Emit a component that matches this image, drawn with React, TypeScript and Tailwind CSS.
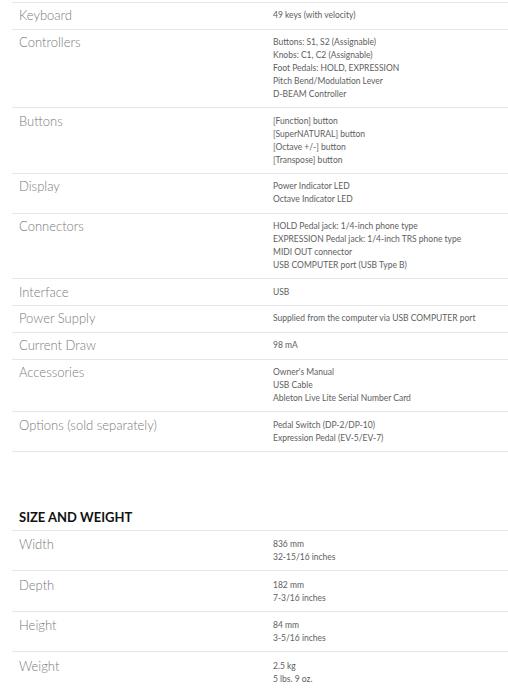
type Spec = { label: string; values: string[] };

const specs: Spec[] = [
  { label: 'Keyboard', values: ['49 keys (with velocity)'] },
  {
    label: 'Controllers',
    values: [
      'Buttons: S1, S2 (Assignable)',
      'Knobs: C1, C2 (Assignable)',
      'Foot Pedals: HOLD, EXPRESSION',
      'Pitch Bend/Modulation Lever',
      'D-BEAM Controller',
    ],
  },
  {
    label: 'Buttons',
    values: ['[Function] button', '[SuperNATURAL] button', '[Octave +/-] button', '[Transpose] button'],
  },
  { label: 'Display', values: ['Power Indicator LED', 'Octave Indicator LED'] },
  {
    label: 'Connectors',
    values: [
      'HOLD Pedal jack: 1/4-inch phone type',
      'EXPRESSION Pedal jack: 1/4-inch TRS phone type',
      'MIDI OUT connector',
      'USB COMPUTER port (USB Type B)',
    ],
  },
  { label: 'Interface', values: ['USB'] },
  { label: 'Power Supply', values: ['Supplied from the computer via USB COMPUTER port'] },
  { label: 'Current Draw', values: ['98 mA'] },
  {
    label: 'Accessories',
    values: ["Owner's Manual", 'USB Cable', 'Ableton Live Lite Serial Number Card'],
  },
  {
    label: 'Options (sold separately)',
    values: ['Pedal Switch (DP-2/DP-10)', 'Expression Pedal (EV-5/EV-7)'],
  },
];

const sizes: Spec[] = [
  { label: 'Width', values: ['836 mm', '32-15/16 inches'] },
  { label: 'Depth', values: ['182 mm', '7-3/16 inches'] },
  { label: 'Height', values: ['84 mm', '3-5/16 inches'] },
  { label: 'Weight', values: ['2.5 kg', '5 lbs. 9 oz.'] },
];

function SpecRow({ spec, last, roomy }: { spec: Spec; last?: boolean; roomy?: boolean }) {
  return (
    <div
      className={`grid grid-cols-[254px_1fr] items-start px-[7px] ${
        roomy ? 'pt-[7.5px] pb-[6px]' : 'py-[6.35px]'
      } ${last ? '' : 'border-b border-[#e6e6e6]'}`}
    >
      <div className="text-[13px] leading-[13px] font-light text-[#7a7a7a]">{spec.label}</div>
      <div className="text-[8.5px] leading-[13px] text-[#5e5e5e]">
        {spec.values.map((v) => (
          <div key={v}>{v}</div>
        ))}
      </div>
    </div>
  );
}

export default function App() {
  return (
    <main className="bg-white min-h-screen pt-[2px] pl-[12px] font-['Lato',sans-serif]">
      {/* Main specs table */}
      <section className="border-t border-[#e6e6e6]">
        {specs.map((s) => (
          <SpecRow key={s.label} spec={s} />
        ))}
      </section>

      {/* Size and weight */}
      <section className="mt-[57px]">
        <h2 className="px-[7px] pb-[5px] text-[13px] leading-[16px] font-bold text-[#111]">
          SIZE AND WEIGHT
        </h2>
        <div className="border-t border-[#e6e6e6]">
          {sizes.map((s, i) => (
            <SpecRow key={s.label} spec={s} roomy last={i === sizes.length - 1} />
          ))}
        </div>
      </section>
    </main>
  );
}
